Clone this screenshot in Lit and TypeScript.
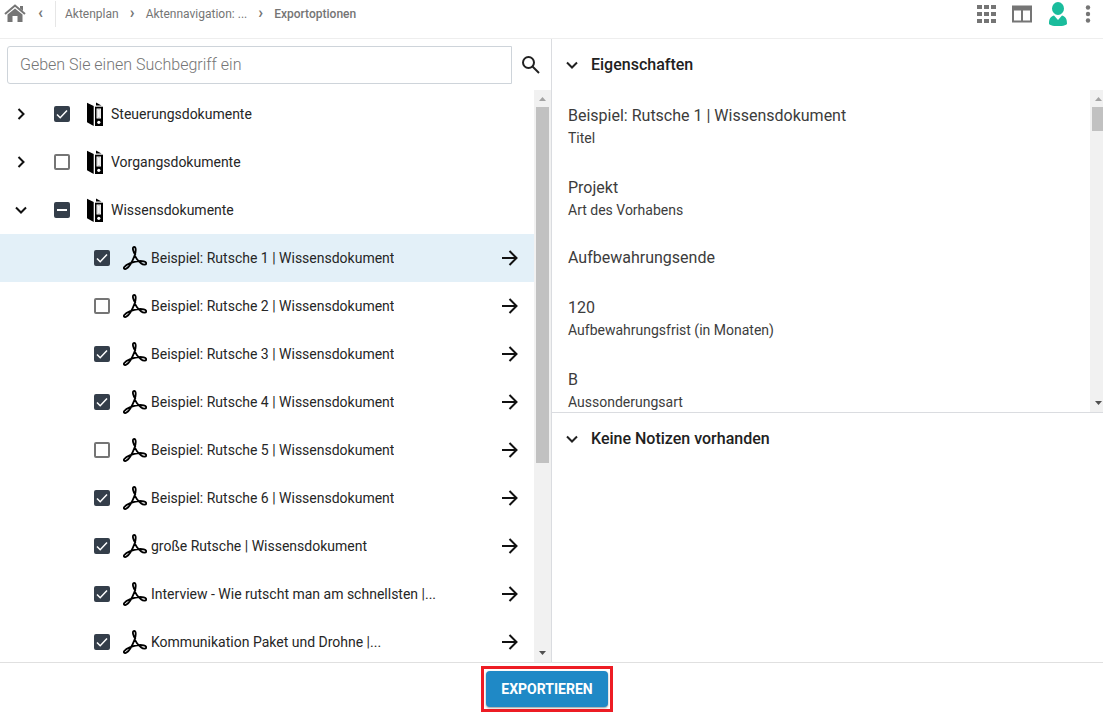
import { LitElement, html, css, svg, nothing } from "lit";
import { customElement, property, state } from "lit/decorators.js";
import { classMap } from "lit/directives/class-map.js";

type CheckState = "on" | "off" | "mixed";

interface TreeEntry {
  id: string;
  label: string;
  check: CheckState;
  folder?: boolean;
  open?: boolean;
  selected?: boolean;
}

const icon = (size: number, body: unknown, viewBox = "0 0 24 24") =>
  html`<svg width=${size} height=${size} viewBox=${viewBox} aria-hidden="true">${body}</svg>`;

const chevronRight = svg`<path d="M9.500 7l5 5-5 5" fill="none" stroke="currentColor" stroke-width="2"/>`;
const chevronDown = svg`<path d="M7 9.500l5 5 5-5" fill="none" stroke="currentColor" stroke-width="2"/>`;

const binder = svg`
  <path d="M1 .7L7.700 4V24L1 20.200Z" fill="#000"/>
  <path d="M10 3.500V.5L15.500 3.500Z" fill="#000"/>
  <path d="M9 4.700H17V24H9Z" fill="#000"/>
  <path d="M10.500 6.500H15V16.500H10.500Z" fill="#fff"/>
  <path d="M11.700 7.500H14V15.500H11.700Z" fill="#fff" stroke="#999" stroke-width=".4"/>
  <circle cx="12.800" cy="20.300" r="1.600" fill="#fff"/>`;

const pdf = svg`<path fill="none" stroke="#000" stroke-width="1.800" stroke-linejoin="round" d="
  M12.600 9.200C10.200 6.200 8.800 1 11.100 .9C13.500 1 12.900 6.300 11.500 9.800
  C9.600 14.700 6.400 20.700 3.500 22.600C1.600 23.800 .2 22.500 1.300 20.900C3.300 17.900 10.500 15.600 15.500 15.100
  C19.300 14.800 23.300 15.400 23.300 17.400C23.200 19.200 20.300 19 17.900 17.200C15 15.200 12.700 11.800 11.500 9.200"/>`;

@customElement("scroll-track")
export class ScrollTrack extends LitElement {
  @property({ type: Number }) share = 0.5;

  static styles = css`
    :host {
      display: flex;
      flex-direction: column;
      flex: none;
      width: 17px;
      background: #f1f1f1;
    }
    .arrow {
      height: 17px;
      display: flex;
      align-items: center;
      justify-content: center;
      color: #505050;
    }
    .up {
      color: #a3a3a3;
    }
    .rail {
      flex: 1;
      min-height: 0;
      padding: 0 2px;
    }
    .thumb {
      background: #c1c1c1;
    }
  `;

  render() {
    return html`
      <div class="arrow up">${icon(7, svg`<path d="M0 6L3.500 2L7 6Z" fill="currentColor"/>`, "0 0 7 7")}</div>
      <div class="rail"><div class="thumb" style="height:${this.share * 100}%"></div></div>
      <div class="arrow">${icon(7, svg`<path d="M0 1L3.500 5L7 1Z" fill="currentColor"/>`, "0 0 7 7")}</div>
    `;
  }
}

@customElement("tree-row")
export class TreeRow extends LitElement {
  @property({ attribute: false }) entry!: TreeEntry;

  static styles = css`
    .row {
      display: flex;
      align-items: center;
      height: 48px;
      padding-right: 12px;
      color: #262626;
    }
    .child {
      padding-left: 94px;
    }
    .selected {
      background: #e3f0f8;
    }
    button {
      display: flex;
      flex: none;
      padding: 0;
      border: 0;
      background: none;
      color: #111;
      cursor: pointer;
    }
    .toggle {
      margin: 0 21px 0 9px;
    }
    label {
      flex: 1;
      min-width: 0;
      display: flex;
      align-items: center;
      font-size: 14px;
      line-height: 20px;
    }
    input {
      appearance: none;
      flex: none;
      width: 16px;
      height: 16px;
      margin: 0;
      border: 2px solid #757575;
      border-radius: 2px;
      background: transparent;
    }
    .box {
      display: grid;
      flex: none;
      color: #fff;
    }
    .box > * {
      grid-area: 1 / 1;
    }
    .box svg {
      pointer-events: none;
    }
    input:checked,
    input:indeterminate {
      border-color: #343e4a;
      background: #343e4a;
    }
    .symbol {
      display: flex;
      flex: none;
      margin: 0 4px 0 13px;
    }
    .folder .symbol {
      margin: 0 1px 0 16px;
    }
    .name {
      overflow: hidden;
      white-space: nowrap;
      text-overflow: ellipsis;
    }
  `;

  private onChange(e: Event) {
    const checked = (e.target as HTMLInputElement).checked;
    this.entry = { ...this.entry, check: checked ? "on" : "off" };
  }

  render() {
    const { label, check, folder, open, selected } = this.entry;
    return html`
      <div class=${classMap({ row: true, folder: !!folder, child: !folder, selected: !!selected })}>
        ${folder
          ? html`<button class="toggle" aria-label=${open ? "Zuklappen" : "Aufklappen"}>
              ${icon(24, open ? chevronDown : chevronRight)}
            </button>`
          : nothing}
        <label>
          <span class="box">
            <input
              type="checkbox"
              .checked=${check === "on"}
              .indeterminate=${check === "mixed"}
              @change=${this.onChange}
            />
            ${check === "on"
              ? icon(16, svg`<path d="M3 8.500L6.200 11.700L13 4.500" fill="none" stroke="currentColor" stroke-width="1.500"/>`, "0 0 16 16")
              : check === "mixed"
                ? icon(16, svg`<path d="M3 8H13" fill="none" stroke="currentColor" stroke-width="2"/>`, "0 0 16 16")
                : nothing}
          </span>
          <span class="symbol">${icon(24, folder ? binder : pdf)}</span>
          <span class="name">${label}</span>
        </label>
        ${folder
          ? nothing
          : html`<button aria-label="Öffnen">
              ${icon(24, svg`<path d="M4 12H18.500M11.500 5L18.500 12L11.500 19" fill="none" stroke="currentColor" stroke-width="2"/>`)}
            </button>`}
      </div>
    `;
  }
}

@customElement("app-root")
export class AppRoot extends LitElement {
  @state() private entries: TreeEntry[] = [
    { id: "s", label: "Steuerungsdokumente", check: "on", folder: true },
    { id: "v", label: "Vorgangsdokumente", check: "off", folder: true },
    { id: "w", label: "Wissensdokumente", check: "mixed", folder: true, open: true },
    { id: "w1", label: "Beispiel: Rutsche 1 | Wissensdokument", check: "on", selected: true },
    { id: "w2", label: "Beispiel: Rutsche 2 | Wissensdokument", check: "off" },
    { id: "w3", label: "Beispiel: Rutsche 3 | Wissensdokument", check: "on" },
    { id: "w4", label: "Beispiel: Rutsche 4 | Wissensdokument", check: "on" },
    { id: "w5", label: "Beispiel: Rutsche 5 | Wissensdokument", check: "off" },
    { id: "w6", label: "Beispiel: Rutsche 6 | Wissensdokument", check: "on" },
    { id: "w7", label: "große Rutsche | Wissensdokument", check: "on" },
    { id: "w8", label: "Interview - Wie rutscht man am schnellsten |...", check: "on" },
    { id: "w9", label: "Kommunikation Paket und Drohne |...", check: "on" },
  ];

  private facts: { value: string; name?: string }[] = [
    { value: "Beispiel: Rutsche 1 | Wissensdokument", name: "Titel" },
    { value: "Projekt", name: "Art des Vorhabens" },
    { value: "Aufbewahrungsende" },
    { value: "120", name: "Aufbewahrungsfrist (in Monaten)" },
    { value: "B", name: "Aussonderungsart" },
  ];

  static styles = css`
    :host {
      display: flex;
      flex-direction: column;
      height: 100vh;
      overflow: hidden;
      background: #fff;
      color: #212121;
      font-family: Roboto, "Liberation Sans", sans-serif;
    }
    * {
      box-sizing: border-box;
    }
    button {
      font-family: inherit;
      cursor: pointer;
    }
    .bar {
      flex: none;
      display: flex;
      align-items: center;
      justify-content: space-between;
      height: 39px;
      padding: 0 3px 10px 4px;
      border-bottom: 1px solid #eee;
      color: #757575;
    }
    .crumbs,
    .tools {
      display: flex;
      align-items: center;
    }
    .crumbs {
      font-size: 12px;
      line-height: 16px;
    }
    .crumbs a {
      color: inherit;
      text-decoration: none;
    }
    .crumbs svg {
      display: block;
    }
    .crumbs .back,
    .sep {
      display: flex;
      justify-content: center;
      width: 27px;
      padding-bottom: 2px;
      font-size: 16px;
      font-weight: 700;
    }
    .crumbs .back {
      width: 29px;
    }
    .split {
      width: 1px;
      height: 26px;
      margin-right: 9px;
      background: #e6e6e6;
    }
    .here {
      font-weight: 500;
    }
    .tools {
      gap: 12px;
    }
    .plain {
      display: flex;
      padding: 0;
      border: 0;
      background: none;
      color: inherit;
    }
    .more {
      margin-left: -6px;
    }
    .main {
      flex: 1;
      min-height: 0;
      display: grid;
      grid-template-columns: minmax(0, 552fr) minmax(0, 551fr);
    }
    .left {
      display: flex;
      flex-direction: column;
      min-width: 0;
      min-height: 0;
      border-right: 1px solid #dadce0;
    }
    .search {
      flex: none;
      display: flex;
      align-items: center;
      gap: 7px;
      height: 51px;
      padding: 0 8px 0 7px;
    }
    .search input {
      flex: 1;
      min-width: 0;
      height: 38px;
      padding: 0 12px;
      border: 1px solid #ced4da;
      border-radius: 3px 0 0 3px;
      outline: none;
      color: #212121;
      font: 300 16px/24px Roboto, "Liberation Sans", sans-serif;
    }
    .search input::placeholder {
      color: #757575;
    }
    .scroller {
      flex: 1;
      min-height: 0;
      display: flex;
    }
    .content {
      flex: 1;
      min-width: 0;
      overflow: auto;
      scrollbar-width: none;
    }
    .right {
      display: flex;
      flex-direction: column;
      min-width: 0;
      min-height: 0;
    }
    h2 {
      flex: none;
      display: flex;
      align-items: center;
      height: 51px;
      margin: 0;
      padding-left: 8px;
      font-size: 16px;
      line-height: 24px;
      font-weight: 500;
    }
    h2 .plain {
      gap: 7px;
      align-items: center;
      font: inherit;
    }
    .props {
      flex: 323;
      margin-right: -4px;
    }
    .notes {
      flex: 249;
      border-top: 1px solid #dadce0;
    }
    dl {
      margin: 0;
      padding: 2px 16px 0;
    }
    .fact {
      display: flex;
      flex-direction: column-reverse;
      justify-content: flex-end;
      height: 72px;
      padding-top: 12px;
      color: #3c3c3c;
    }
    .single {
      height: 48px;
      padding-top: 10px;
    }
    dt {
      font-size: 14px;
      line-height: 20px;
    }
    dd {
      margin: 0;
      font-size: 16px;
      line-height: 24px;
    }
    .foot {
      flex: none;
      display: flex;
      justify-content: center;
      height: 51px;
      padding: 3px 0 1px;
      border-top: 1px solid #e0e0e0;
    }
    .frame {
      display: flex;
      margin-right: 9px;
      padding: 2px;
      border: 3px solid #ed1c24;
    }
    .export {
      padding: 0 15px;
      border: 0;
      border-radius: 4px;
      background: #1f89c6;
      box-shadow: 0 1px 2px rgba(0, 0, 0, 0.4);
      color: #fff;
      font-size: 14px;
      line-height: 20px;
      font-weight: 700;
    }
  `;

  render() {
    return html`
      <header class="bar">
        <nav class="crumbs" aria-label="Pfad">
          <a href="#" aria-label="Start">
            ${icon(22, svg`
              <path d="M1 11L11 2.500L21 11" fill="none" stroke="#757575" stroke-width="2"/>
              <path d="M16 3H19V8L16 5.500Z" fill="#757575"/>
              <path d="M3.500 11.500L11 5.500L18.500 11.500V19H13.500V13H8.500V19H3.500Z" fill="#757575"/>`, "0 0 22 22")}
          </a>
          <a class="back" href="#" aria-label="Zurück">‹</a>
          <span class="split"></span>
          <a href="#">Aktenplan</a><span class="sep">›</span>
          <a href="#">Aktennavigation: ...</a><span class="sep">›</span>
          <span class="here">Exportoptionen</span>
        </nav>
        <div class="tools">
          <button class="plain" aria-label="Anwendungen">
            ${icon(24, svg`${[3, 10, 17].map((y) => [3, 10, 17].map((x) => svg`<rect x=${x} y=${y} width="5" height="4" fill="#757575"/>`))}`)}
          </button>
          <button class="plain" aria-label="Ansicht">
            ${icon(24, svg`<path fill="#757575" fill-rule="evenodd" d="M2 3.500H22V20.500H2ZM4 8.500V18.500H11V8.500ZM13 8.500V18.500H20V8.500Z"/>`)}
          </button>
          <button class="plain" aria-label="Profil">
            ${icon(24, svg`<g fill="#1abc9c"><ellipse cx="12" cy="6.500" rx="6" ry="6.500"/><path d="M3 22C3 17 4 15 8 13.500L12 18L16 13.500C20 15 21 17 21 22C18 25 6 25 3 22Z"/></g>`)}
          </button>
          <button class="plain more" aria-label="Mehr">
            ${icon(24, svg`<g fill="#757575"><circle cx="12" cy="5.500" r="2.200"/><circle cx="12" cy="12" r="2.200"/><circle cx="12" cy="18.500" r="2.200"/></g>`)}
          </button>
        </div>
      </header>
      <main class="main">
        <section class="left">
          <form class="search" @submit=${(e: Event) => e.preventDefault()}>
            <input type="text" aria-label="Suchbegriff" placeholder="Geben Sie einen Suchbegriff ein" />
            <button class="plain" aria-label="Suchen">
              ${icon(24, svg`<g fill="none" stroke="#212121" stroke-width="2"><circle cx="9.500" cy="9.500" r="5.500"/><path d="M13.500 13.500L20 20"/></g>`)}
            </button>
          </form>
          <div class="scroller">
            <div class="content">${this.entries.map((e) => html`<tree-row .entry=${e}></tree-row>`)}</div>
            <scroll-track .share=${0.662}></scroll-track>
          </div>
        </section>
        <section class="right">
          <h2><button class="plain">${icon(24, chevronDown)}Eigenschaften</button></h2>
          <div class="scroller props">
            <div class="content">
              <dl>
                ${this.facts.map((f) => html`
                  <div class=${classMap({ fact: true, single: !f.name })}>
                    ${f.name ? html`<dt>${f.name}</dt>` : nothing}
                    <dd>${f.value}</dd>
                  </div>`)}
              </dl>
            </div>
            <scroll-track .share=${0.083}></scroll-track>
          </div>
          <div class="notes">
            <h2><button class="plain">${icon(24, chevronDown)}Keine Notizen vorhanden</button></h2>
          </div>
        </section>
      </main>
      <footer class="foot">
        <div class="frame"><button class="export">EXPORTIEREN</button></div>
      </footer>
    `;
  }
}
